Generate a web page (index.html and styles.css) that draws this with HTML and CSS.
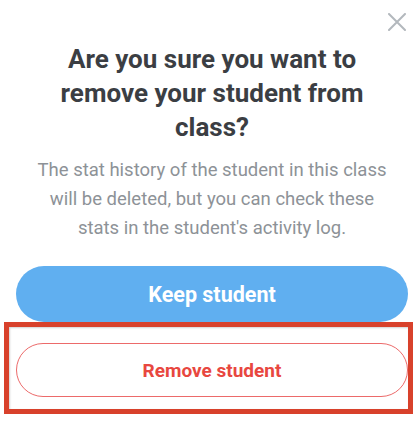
FILE: index.html
```html
<!DOCTYPE html>
<html lang="en">
<head>
<meta charset="utf-8">
<link rel="stylesheet" href="styles.css">
</head>
<body>
<div class="dialog">
  <button class="close" aria-label="Close">
    <svg width="18" height="18" viewBox="0 0 18 18"><path d="M1 1 L17 17 M17 1 L1 17" stroke="#b3b8bd" stroke-width="2" stroke-linecap="round"/></svg>
  </button>
  <h1 class="title">Are you sure you want to remove your student from class?</h1>
  <p class="desc">The stat history of the student in this class will be deleted, but you can check these stats in the student's activity log.</p>
  <div class="actions">
    <button class="btn btn-keep">Keep student</button>
    <button class="btn btn-remove">Remove student</button>
  </div>
  <div class="highlight"></div>
</div>
</body>
</html>
```

FILE: styles.css
```css
html, body {
  margin: 0;
  padding: 0;
  background: #ffffff;
}
body {
  font-family: Roboto, "Noto Sans", Arial, sans-serif;
  width: 417px;
  height: 426px;
  overflow: hidden;
}
.dialog {
  position: relative;
  padding: 42px 9px 0 16px;
  display: flex;
  flex-direction: column;
  align-items: stretch;
}
.close {
  position: absolute;
  top: 13px;
  right: 11px;
  width: 18px;
  height: 18px;
  padding: 0;
  border: 0;
  background: none;
  display: flex;
}
.title {
  margin: 0 30px;
  font-size: 26px;
  line-height: 34px;
  font-weight: 700;
  color: #3b3e43;
  text-align: center;
}
.desc {
  margin: 12px 0 0;
  font-size: 18.5px;
  line-height: 29px;
  color: #8d9297;
  text-align: center;
  padding: 0 12px;
}
.actions {
  margin-top: 23px;
  display: flex;
  flex-direction: column;
  gap: 21px;
}
.btn {
  font-family: Roboto, "Noto Sans", Arial, sans-serif;
  font-weight: 700;
  border-radius: 999px;
  cursor: pointer;
}
.btn-keep {
  height: 56px;
  border: 0;
  background: #60aff0;
  color: #ffffff;
  font-size: 21.5px;
}
.btn-remove {
  height: 54px;
  border: 1px solid #ec6a6a;
  background: #ffffff;
  color: #e8473f;
  font-size: 19px;
}
.highlight {
  position: absolute;
  left: 4px;
  top: 322px;
  width: 399px;
  height: 82px;
  border: 5px solid #d8412b;
  box-shadow: inset 1px 1px 2px rgba(0,0,0,0.18);
  pointer-events: none;
}
```
